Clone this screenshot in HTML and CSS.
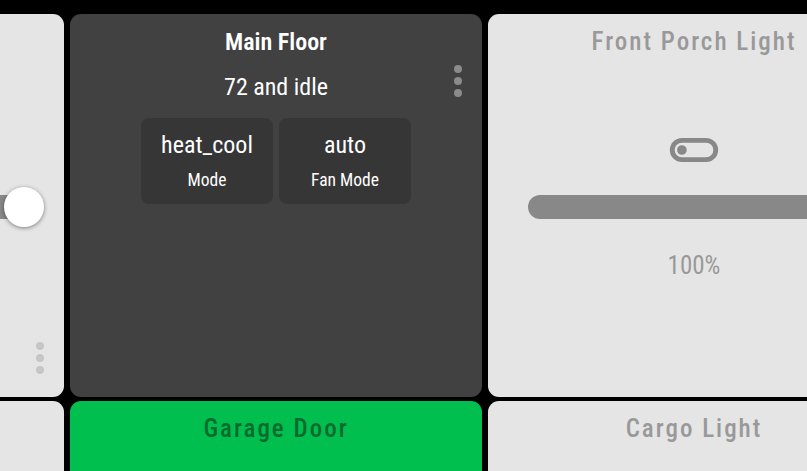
FILE: index.html
```html
<!DOCTYPE html>
<html>
<head>
<meta charset="utf-8">
<link rel="stylesheet" href="styles.css">
</head>
<body>
<div class="board">
  <div class="card light">
    <div class="slider-wrap">
      <div class="track"><span class="knob"></span></div>
    </div>
    <svg class="dots dots-bottom" width="8" height="32" viewBox="0 0 8 32"><circle cx="4" cy="4" r="4"/><circle cx="4" cy="16" r="4"/><circle cx="4" cy="28" r="4"/></svg>
  </div>
  <div class="card dark">
    <div class="title">Main Floor</div>
    <div class="subtitle">72 and idle</div>
    <div class="modes">
      <div class="mode"><div class="mode-val">heat_cool</div><div class="mode-lbl">Mode</div></div>
      <div class="mode"><div class="mode-val">auto</div><div class="mode-lbl">Fan Mode</div></div>
    </div>
    <svg class="dots dots-top" width="8" height="32" viewBox="0 0 8 32"><circle cx="4" cy="4" r="4"/><circle cx="4" cy="16" r="4"/><circle cx="4" cy="28" r="4"/></svg>
  </div>
  <div class="card light">
    <div class="title spaced grey">Front Porch Light</div>
    <svg class="toggle" width="58" height="58" viewBox="0 0 24 24"><path d="M17,7H7A5,5 0 0,0 2,12A5,5 0 0,0 7,17H17A5,5 0 0,0 22,12A5,5 0 0,0 17,7M17,15H7A3,3 0 0,1 4,12A3,3 0 0,1 7,9H17A3,3 0 0,1 20,12A3,3 0 0,1 17,15M7,10A2,2 0 0,0 5,12A2,2 0 0,0 7,14A2,2 0 0,0 9,12A2,2 0 0,0 7,10Z"/></svg>
    <div class="slider-wrap right-slider">
      <div class="track"><span class="knob"></span></div>
    </div>
    <div class="pct">100%</div>
  </div>
  <div class="card light"></div>
  <div class="card green">
    <div class="title spaced dkgreen">Garage Door</div>
  </div>
  <div class="card light">
    <div class="title spaced grey">Cargo Light</div>
  </div>
</div>
</body>
</html>
```
FILE: styles.css
```css
html, body {
  margin: 0;
  padding: 0;
  background: #000;
  width: 807px;
  height: 471px;
  overflow: hidden;
}
body {
  font-family: "Roboto Condensed", "Liberation Sans Narrow", "DejaVu Sans Condensed", "DejaVu Sans", sans-serif;
  font-stretch: condensed;
}
.board {
  display: grid;
  grid-template-columns: repeat(3, 412px);
  grid-template-rows: 383px 383px;
  column-gap: 6px;
  row-gap: 4px;
  margin-left: -348px;
  padding-top: 14px;
}
.card {
  position: relative;
  border-radius: 11px;
  display: flex;
  flex-direction: column;
  align-items: center;
  padding-top: 12px;
  box-sizing: border-box;
  overflow: hidden;
}
.light { background: #e5e5e5; }
.dark { background: #414141; color: #fff; }
.green { background: #00bf4f; }
.title {
  font-size: 24px;
  line-height: 32px;
  font-weight: 600;
}
.spaced { letter-spacing: 2px; font-weight: 500; font-size: 25px; }
.grey { color: #999; }
.dkgreen { color: #0b6a2d; }
.subtitle {
  font-size: 24px;
  line-height: 32px;
  margin-top: 13px;
}
.modes {
  margin-top: 15px;
  display: grid;
  grid-template-columns: 132px 132px;
  column-gap: 6px;
}
.mode {
  background: #363636;
  border-radius: 8px;
  height: 86px;
  box-sizing: border-box;
  padding-top: 12px;
  display: flex;
  flex-direction: column;
  align-items: center;
}
.mode-val { font-size: 24px; line-height: 30px; }
.mode-lbl { font-size: 17.5px; line-height: 24px; margin-top: 8px; }
.dots {
  position: absolute;
  right: 20px;
}
.dots-top { top: 51px; fill: #8b8b8b; }
.dots-bottom { bottom: 23px; fill: #c6c6c6; }
.toggle {
  fill: #888;
  margin-top: 63px;
}
.slider-wrap {
  align-self: stretch;
  padding: 0 40px;
}
.card.light > .slider-wrap:first-child { margin-top: 169px; }
.right-slider { margin-top: 16px; }
.track {
  position: relative;
  height: 24px;
  border-radius: 12px;
  background: #888;
}
.knob {
  position: absolute;
  right: -20px;
  top: -8px;
  width: 40px;
  height: 40px;
  border-radius: 50%;
  background: #fff;
  box-shadow: 0 1px 4px rgba(0,0,0,0.45);
}
.pct {
  color: #999;
  font-size: 25px;
  line-height: 32px;
  margin-top: 31px;
}
```
